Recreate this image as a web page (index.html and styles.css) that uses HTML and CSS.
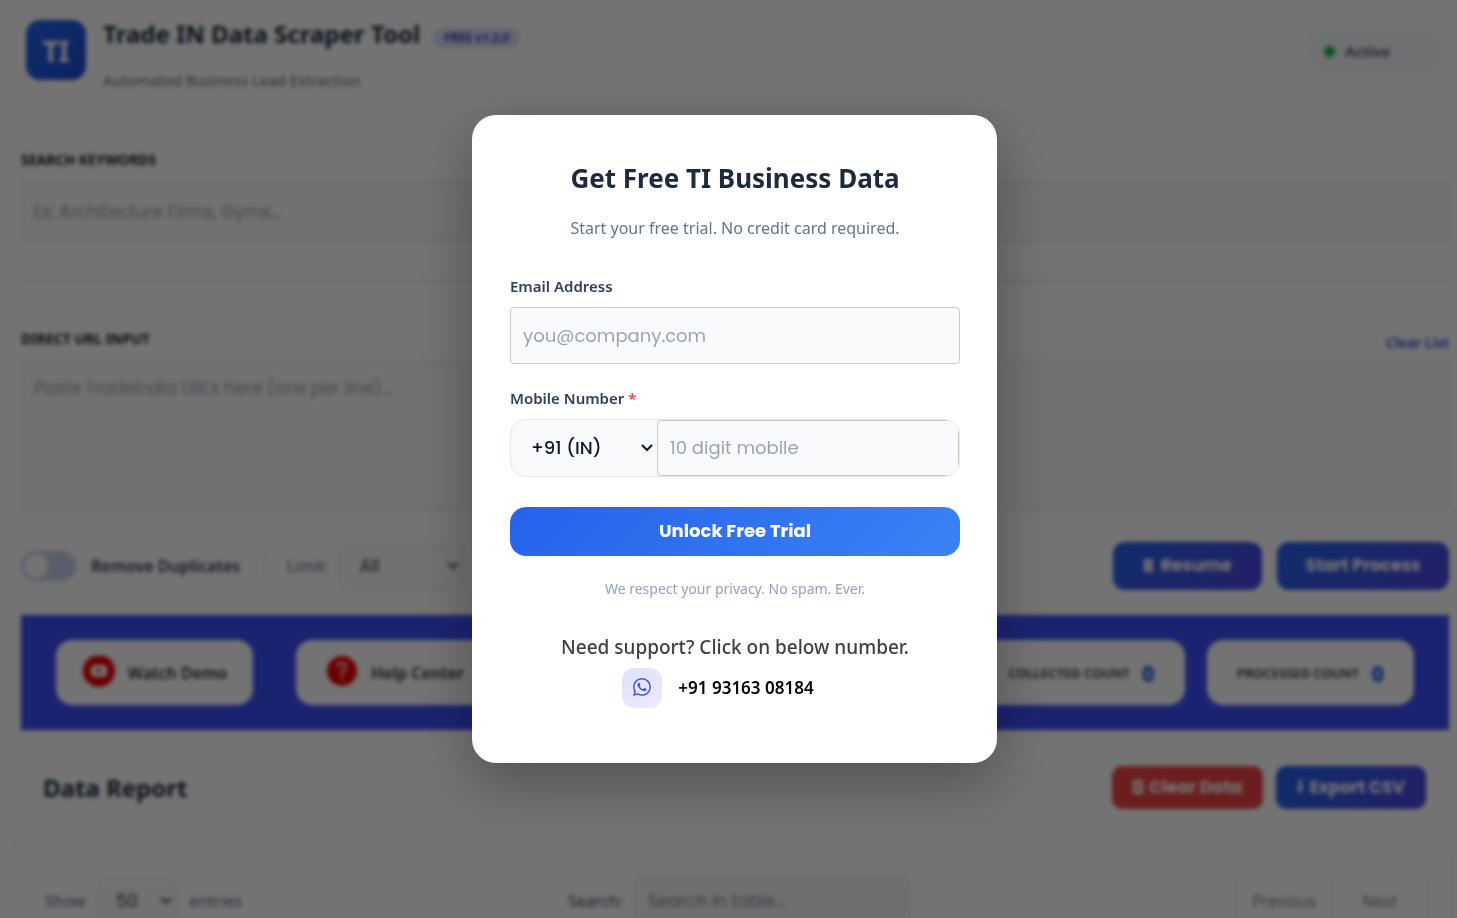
FILE: index.html
```html
<!DOCTYPE html>
<html lang="en">
<head>
<meta charset="utf-8">
<meta name="viewport" content="width=device-width, initial-scale=1">
<title>Trade IN Data Scraper Tool</title>
<link rel="stylesheet" href="styles.css">
</head>
<body>
<div class="page">
  <header class="header">
    <div class="logo">TI</div>
    <div class="brand">
      <div class="brand-top"><h1 class="brand-name">Trade IN Data Scraper Tool</h1><span class="version">FREE v1.2.0</span></div>
      <p class="tagline">Automated Business Lead Extraction</p>
    </div>
    <div class="status"><span class="dot"></span><span>Active</span><span class="status-rule"></span></div>
  </header>
  <main class="main">
    <label class="caps" for="keywords">SEARCH KEYWORDS</label>
    <input class="field keywords" id="keywords" type="text" placeholder="Ex: Architecture Firms, Gyms...">
    <hr class="rule">
    <div class="url-head">
      <label class="caps" for="urls">DIRECT URL INPUT</label>
      <button class="link-button" type="button">Clear List</button>
    </div>
    <textarea class="field urls" id="urls" placeholder="Paste TradeIndia URLs here (one per line)..."></textarea>
    <div class="controls">
      <label class="toggle"><input class="switch" type="checkbox">Remove Duplicates</label>
      <span class="bar"></span>
      <label class="muted" for="limit">Limit:</label>
      <div class="select-box limit"><select id="limit"><option>All</option></select>
        <svg class="chevron" viewBox="0 0 12 8"><path d="M1 1l5 5 5-5"/></svg></div>
      <div class="actions">
        <button class="btn btn-resume" type="button"><svg width="9" height="13" viewBox="0 0 9 13"><path d="M0 0h9v13H0zM3 3v2h3V3zM3 8v2h3V8z" fill="currentColor" fill-rule="evenodd"/></svg>Resume</button>
        <button class="btn btn-start" type="button">Start Process</button>
      </div>
    </div>
    <section class="banner">
      <a class="tile tile-demo" href="#"><svg width="34" height="34" viewBox="0 0 34 34"><circle cx="17" cy="15" r="16" fill="#f00000"/><rect x="9" y="9" width="16" height="12" rx="4" fill="#fff"/><path d="M15 12l5 3-5 3z" fill="#f00000"/></svg>Watch Demo</a>
      <a class="tile tile-help" href="#"><svg width="34" height="34" viewBox="0 0 34 34"><circle cx="17" cy="15" r="15" fill="#f00000"/><path d="M13 11q0-4 4-4t4 4q0 2-4 5v3M17 21v3" fill="none" stroke="#fff" stroke-width="2"/></svg>Help Center</a>
      <div class="tile count first-count">COLLECTED COUNT <b>0</b></div>
      <div class="tile count">PROCESSED COUNT <b>0</b></div>
    </section>
    <section class="report">
      <h2 class="report-title">Data Report</h2>
      <button class="btn btn-small btn-clear" type="button"><svg width="10" height="14" viewBox="0 0 10 14"><path d="M0 0h10v14H0zM3 3v3h4V3zM3 8v3h4V8z" fill="currentColor" fill-rule="evenodd"/></svg>Clear Data</button>
      <button class="btn btn-small btn-export" type="button"><svg width="6" height="14" viewBox="0 0 6 14"><path d="M2 0h3v8h1l-3 6-3-6h2z" fill="currentColor"/></svg>Export CSV</button>
    </section>
    <section class="table-card">
      <div class="length"><label for="rows">Show</label>
        <div class="select-box rows"><select id="rows"><option>50</option></select>
          <svg class="chevron" viewBox="0 0 12 8"><path d="M1 1l5 5 5-5"/></svg></div>
        <span>entries</span></div>
      <div class="search"><label for="search">Search:</label><input class="search-input" id="search" type="search" placeholder="Search in table..."></div>
      <nav class="pager"><button type="button">Previous</button><button type="button">Next</button></nav>
    </section>
  </main>
</div>

<div class="overlay">
  <form class="modal" role="dialog" aria-labelledby="modal-title">
    <h2 class="modal-title" id="modal-title">Get Free TI Business Data</h2>
    <p class="modal-sub">Start your free trial. No credit card required.</p>
    <label class="label" for="email">Email Address</label>
    <input class="email" id="email" type="email" placeholder="you@company.com">
    <label class="label" for="mobile">Mobile Number <span class="required">*</span></label>
    <div class="phone">
      <div class="code"><select aria-label="Country code"><option>+91 (IN)</option></select>
        <svg class="chevron" viewBox="0 0 12 8"><path d="M1 1l5 5 5-5"/></svg></div>
      <input class="mobile" id="mobile" type="tel" placeholder="10 digit mobile">
    </div>
    <button class="unlock" type="submit">Unlock Free Trial</button>
    <p class="privacy">We respect your privacy. No spam. Ever.</p>
    <p class="support">Need support? Click on below number.</p>
    <a class="whatsapp" href="#">
      <span class="wa-icon"><svg width="18" height="18" viewBox="0 0 16 16" fill="currentColor"><path d="M13.601 2.326A7.854 7.854 0 0 0 7.994 0C3.627 0 .068 3.558.064 7.926c0 1.399.366 2.760 1.057 3.965L0 16l4.204-1.102a7.933 7.933 0 0 0 3.790.965h.004c4.368 0 7.926-3.558 7.930-7.930A7.898 7.898 0 0 0 13.600 2.326zM7.994 14.521a6.573 6.573 0 0 1-3.356-.920l-.240-.144-2.494.654.666-2.433-.156-.251a6.560 6.560 0 0 1-1.007-3.505c0-3.626 2.957-6.584 6.591-6.584a6.560 6.560 0 0 1 4.660 1.931 6.557 6.557 0 0 1 1.928 4.660c-.004 3.639-2.961 6.592-6.592 6.592zm3.615-4.934c-.197-.099-1.170-.578-1.353-.646-.182-.065-.315-.099-.445.099-.133.197-.513.646-.627.775-.114.133-.232.148-.430.050-.197-.100-.836-.308-1.592-.985-.590-.525-.985-1.175-1.103-1.372-.114-.198-.011-.304.088-.403.087-.088.197-.232.296-.346.100-.114.133-.198.198-.330.065-.134.034-.248-.015-.347-.050-.099-.445-1.076-.612-1.470-.160-.389-.323-.335-.445-.340-.114-.007-.247-.007-.380-.007a.729.729 0 0 0-.529.247c-.182.198-.691.677-.691 1.654 0 .977.710 1.916.810 2.049.098.133 1.394 2.132 3.383 2.992.470.205.840.326 1.129.418.475.152.904.129 1.246.080.380-.058 1.171-.480 1.338-.943.164-.464.164-.860.114-.943-.049-.084-.182-.133-.380-.232z"/></svg></span>
      <span>+91 93163 08184</span>
    </a>
  </form>
</div>
</body>
</html>
```
FILE: styles.css
```css
:root {
  --text: "Segoe UI", "Noto Sans", sans-serif;
  --round: Poppins, Inter, sans-serif;
  --brand: linear-gradient(135deg, #2563eb, #4f46e5);
}

* { box-sizing: border-box; }

body {
  margin: 0;
  background: #fff;
  color: #1e293b;
  font: 16px/24px var(--text);
}

h1, h2, p { margin: 0; }
a { color: inherit; text-decoration: none; }
button, input, select, textarea { font: inherit; color: inherit; }
button { border: 0; padding: 0; background: none; }

/* Page behind the dialog; scrolling is locked while it is open */
.page { height: 100vh; overflow: hidden; }
.header {
  display: flex;
  align-items: flex-start;
  gap: 17px;
  height: 112px;
  padding: 20px 14px 0 26px;
  border-bottom: 1px solid #e8e8ec;
}
.logo {
  width: 60px;
  height: 60px;
  border-radius: 14px;
  background: linear-gradient(135deg, #2563eb, #1d4ed8);
  color: #fff;
  font: bold 28px/62px var(--text);
  text-align: center;
}
.brand { flex: 1; }
.brand-top { display: flex; align-items: center; gap: 13px; height: 28px; }
.brand-name { font-size: 24px; line-height: 28px; font-weight: 700; }
.version {
  margin-top: 8px;
  padding: 0 11px;
  border-radius: 10px;
  background: #dbe2fe;
  color: #3444a8;
  font-size: 12px;
  line-height: 20px;
  font-weight: 700;
}
.tagline { margin-top: 20px; color: #64748b; font-size: 15px; }
.status {
  display: flex;
  align-items: center;
  gap: 10px;
  height: 48px;
  margin-top: 7px;
  padding: 0 34px 0 17px;
  border-radius: 24px;
  background: #f6f8fb;
  color: #475569;
  font-size: 15px;
  font-weight: 600;
}
.dot { width: 11px; height: 11px; border-radius: 50%; background: #16b854; }
.status-rule { width: 1px; height: 20px; margin-left: 8px; background: #e2e8f0; }

.main { padding: 38px 8px 0 21px; }
.caps { display: block; color: #222; font-size: 14px; line-height: 20px; font-weight: 700; }
.field {
  display: block;
  width: 100%;
  padding: 13px 12px;
  border: 1px solid #d8dade;
  border-radius: 4px;
  background: #f8fafc;
  font: 17px/28px var(--round);
  resize: none;
}
.field::placeholder { color: #9ca3af; }
.keywords { height: 59px; margin-top: 12px; }
.rule { height: 2px; margin: 39px 0 47px; border: 0; background: #e4eaec; }
.url-head { display: flex; justify-content: space-between; }
.link-button { margin-top: 4px; color: #2f55dc; font-size: 14px; line-height: 20px; font-weight: 600; }
.urls { height: 150px; margin-top: 7px; }

.controls { display: flex; align-items: center; height: 48px; margin-top: 32px; }
.toggle { display: flex; align-items: center; gap: 15px; color: #334155; font-weight: 600; }
.switch {
  appearance: none;
  display: flex;
  width: 55px;
  height: 30px;
  margin: 0;
  padding: 3px;
  border-radius: 15px;
  background: #cbd0ea;
}
.switch::before { content: ""; width: 24px; height: 24px; border-radius: 50%; background: #fff; }
.bar { width: 1px; height: 20px; margin: 0 22px 0 24px; background: #dfe3e8; }
.muted { margin-right: 10px; color: #64748b; }

.select-box { display: grid; align-items: center; border: 1px solid #e2e8f0; border-radius: 8px; background: #f8fafc; font-family: var(--round); color: #444; }
.select-box > *, .code > * { grid-area: 1 / 1; }
select { appearance: none; width: 100%; height: 100%; border: 0; background: none; }
.chevron {
  justify-self: end;
  width: 12px;
  height: 8px;
  fill: none;
  stroke: currentColor;
  stroke-width: 2;
  pointer-events: none;
}
.select-box .chevron { margin-right: 5px; }
.limit { width: 126px; height: 46px; font-size: 17px; }
.limit select { padding-left: 20px; }
.rows { width: 80px; height: 46px; font-size: 17px; }
.rows select { padding-left: 18px; }

.actions { display: flex; gap: 15px; margin-left: auto; }
.btn {
  display: flex;
  align-items: center;
  justify-content: center;
  gap: 8px;
  height: 48px;
  padding-bottom: 2px;
  border-radius: 12px;
  background: var(--brand);
  color: #fff;
  font: 700 17px/24px var(--round);
}
.btn-resume { width: 149px; }
.btn-start { width: 172px; }
.btn-small { gap: 6px; height: 43px; border-radius: 10px; }
.btn-clear { width: 151px; background: #ef4444; }
.btn-export { width: 150px; }

.banner { display: flex; height: 115px; margin-top: 25px; padding: 25px 35px; background: #3d4ffb; }
.tile {
  display: flex;
  align-items: center;
  justify-content: center;
  gap: 12px;
  height: 65px;
  border-radius: 16px;
  background: #fff;
  color: #333;
  font-size: 16px;
  font-weight: 600;
}
.tile-demo { width: 197px; margin-right: 43px; }
.tile-help { width: 197px; }
.count { width: 207px; font-size: 13px; }
.count b { color: #2c6be0; font-size: 22px; }
.first-count { margin: 0 22px 0 auto; }

.report { display: flex; align-items: center; gap: 13px; height: 43px; margin-top: 36px; padding: 0 23px 0 22px; }
.report-title { margin-right: auto; font-size: 24px; line-height: 32px; }

.table-card {
  display: flex;
  align-items: center;
  justify-content: space-between;
  height: 160px;
  margin-top: 19px;
  padding: 0 21px 14px 24px;
  border-radius: 16px;
  box-shadow: 0 4px 20px rgb(0 0 0 / 5%);
  color: #64748b;
}
.length, .search { display: flex; align-items: center; gap: 12px; }
.search { color: #475569; }
.search-input {
  width: 275px;
  height: 50px;
  padding: 0 12px;
  border: 1px solid #dfe4ea;
  border-radius: 8px;
  background: #f4f7fa;
  font: 17px/28px var(--round);
}
.search-input::placeholder { color: #868c98; }
.pager { display: flex; }
.pager button { width: 96px; height: 44px; border: 1px solid #f1f3f5; color: #7d8590; }

/* Dialog */
.overlay {
  position: fixed;
  inset: 0;
  display: flex;
  align-items: center;
  justify-content: center;
  padding: 0 0 40px 12px;
  background: rgb(0 0 0 / 55%);
  backdrop-filter: blur(2px);
}
.modal {
  display: flex;
  flex-direction: column;
  width: 525px;
  max-width: 100%;
  padding: 39px 37px 55px 38px;
  border-radius: 24px;
  background: #fff;
  box-shadow: 0 20px 60px rgb(0 0 0 / 30%);
}
.modal-title { font-size: 26px; line-height: 48px; text-align: center; }
.modal-sub { margin: 14px 0 34px; color: #64748b; font-size: 16px; text-align: center; }
.label { margin-bottom: 9px; color: #334155; font-size: 15px; font-weight: 600; }
.required { color: #ef4444; }
.email, .mobile {
  border: 1px solid #c6c9cd;
  border-radius: 4px;
  background: #f8fafc;
  font: 18px/28px var(--round);
}
.email { height: 57px; margin-bottom: 22px; padding: 0 12px; }
.email::placeholder, .mobile::placeholder { color: #9ca3af; }
.phone {
  display: flex;
  height: 58px;
  margin-bottom: 30px;
  overflow: hidden;
  border: 1px solid #e2e8f0;
  border-radius: 16px;
  background: #f8fafc;
}
.code { display: grid; align-items: center; width: 146px; color: #0f172a; font: 500 18px/28px var(--round); }
.code select { padding-left: 20px; }
.code .chevron { margin-right: 4px; }
.mobile { flex: 1; min-width: 0; padding: 0 12px; }
.unlock {
  height: 49px;
  padding-bottom: 2px;
  border-radius: 16px;
  background: linear-gradient(135deg, #2563eb, #3b82f6);
  color: #fff;
  font: 700 18px/28px var(--round);
}
.privacy { margin: 21px 0 34px; color: #94a3b8; font-size: 14px; text-align: center; }
.support { margin-bottom: 9px; color: #3f3f3f; font-size: 19px; font-weight: 500; text-align: center; }
.whatsapp {
  display: flex;
  align-items: center;
  align-self: center;
  gap: 16px;
  margin-right: 34px;
  color: #000;
  font-size: 17px;
  font-weight: 600;
}
.wa-icon {
  display: grid;
  place-items: center;
  width: 40px;
  height: 40px;
  padding-bottom: 2px;
  border-radius: 12px;
  background: linear-gradient(135deg, #dfe3ff, #ebe9fe);
  color: #4655dc;
}
```
